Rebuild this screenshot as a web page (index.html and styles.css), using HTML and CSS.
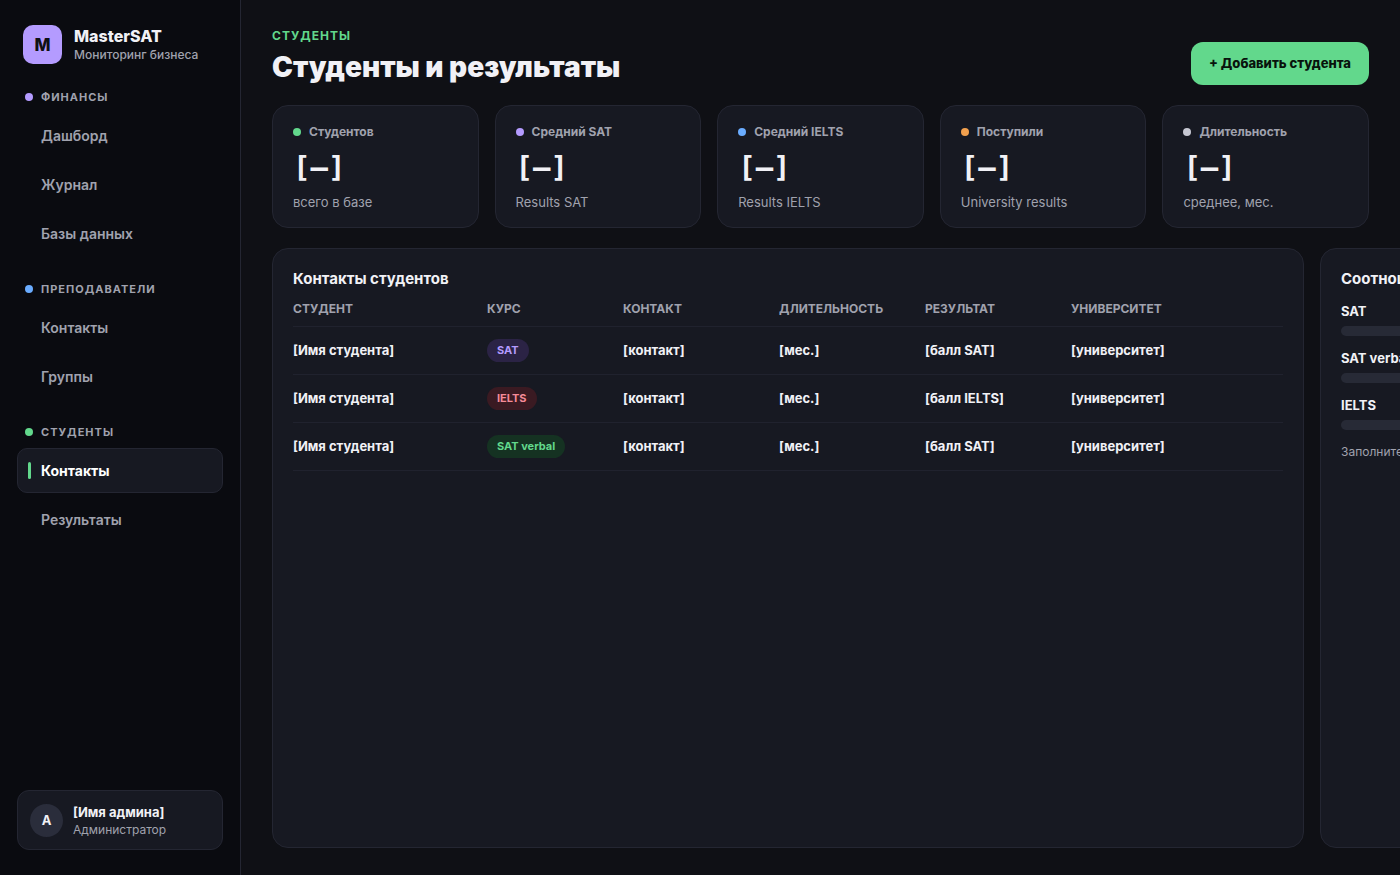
FILE: index.html
```
<!DOCTYPE html>
<html lang="ru">
<head>
    <meta charset="UTF-8">
    <meta name="viewport" content="width=device-width, initial-scale=1.0">
    <title>MasterSAT</title>
    <link rel="stylesheet" href="styles.css">
</head>
<body>
    <div class="app">
        <!-- Sidebar -->
        <aside class="sidebar">
            <div class="brand">
                <div class="brand-logo">M</div>
                <div>
                    <div class="brand-name">MasterSAT</div>
                    <div class="brand-sub">Мониторинг бизнеса</div>
                </div>
            </div>

            <nav class="nav">
                <div class="nav-group">
                    <div class="nav-label"><span class="dot purple"></span>Финансы</div>
                    <a href="#" class="nav-item">Дашборд</a>
                    <a href="#" class="nav-item">Журнал</a>
                    <a href="#" class="nav-item">Базы данных</a>
                </div>
                <div class="nav-group">
                    <div class="nav-label"><span class="dot blue"></span>Преподаватели</div>
                    <a href="#" class="nav-item">Контакты</a>
                    <a href="#" class="nav-item">Группы</a>
                </div>
                <div class="nav-group">
                    <div class="nav-label"><span class="dot green"></span>Студенты</div>
                    <a href="#" class="nav-item active">Контакты</a>
                    <a href="#" class="nav-item">Результаты</a>
                </div>
            </nav>

            <div class="user">
                <div class="avatar">A</div>
                <div>
                    <div class="user-name">[Имя админа]</div>
                    <div class="user-role">Администратор</div>
                </div>
            </div>
        </aside>

        <!-- Main -->
        <main class="main">
            <header class="header">
                <div>
                    <div class="eyebrow">Студенты</div>
                    <h1>Студенты и результаты</h1>
                </div>
                <button type="button" class="add-btn">+ Добавить студента</button>
            </header>

            <section class="stats">
                <div class="stat">
                    <div class="stat-label"><span class="dot green"></span>Студентов</div>
                    <div class="stat-value">[—]</div>
                    <div class="stat-note">всего в базе</div>
                </div>
                <div class="stat">
                    <div class="stat-label"><span class="dot purple"></span>Средний SAT</div>
                    <div class="stat-value">[—]</div>
                    <div class="stat-note">Results SAT</div>
                </div>
                <div class="stat">
                    <div class="stat-label"><span class="dot blue"></span>Средний IELTS</div>
                    <div class="stat-value">[—]</div>
                    <div class="stat-note">Results IELTS</div>
                </div>
                <div class="stat">
                    <div class="stat-label"><span class="dot orange"></span>Поступили</div>
                    <div class="stat-value">[—]</div>
                    <div class="stat-note">University results</div>
                </div>
                <div class="stat">
                    <div class="stat-label"><span class="dot gray"></span>Длительность</div>
                    <div class="stat-value">[—]</div>
                    <div class="stat-note">среднее, мес.</div>
                </div>
            </section>

            <div class="panels">
                <section class="panel">
                    <h2>Контакты студентов</h2>
                    <table class="table">
                        <colgroup>
                            <col class="col-student">
                            <col class="col-course">
                            <col class="col-contact">
                            <col class="col-length">
                            <col class="col-result">
                            <col class="col-university">
                        </colgroup>
                        <thead>
                            <tr>
                                <th>Студент</th>
                                <th>Курс</th>
                                <th>Контакт</th>
                                <th>Длительность</th>
                                <th>Результат</th>
                                <th>Университет</th>
                            </tr>
                        </thead>
                        <tbody>
                            <tr>
                                <td>[Имя студента]</td>
                                <td><span class="badge sat">SAT</span></td>
                                <td>[контакт]</td>
                                <td>[мес.]</td>
                                <td>[балл SAT]</td>
                                <td>[университет]</td>
                            </tr>
                            <tr>
                                <td>[Имя студента]</td>
                                <td><span class="badge ielts">IELTS</span></td>
                                <td>[контакт]</td>
                                <td>[мес.]</td>
                                <td>[балл IELTS]</td>
                                <td>[университет]</td>
                            </tr>
                            <tr>
                                <td>[Имя студента]</td>
                                <td><span class="badge verbal">SAT verbal</span></td>
                                <td>[контакт]</td>
                                <td>[мес.]</td>
                                <td>[балл SAT]</td>
                                <td>[университет]</td>
                            </tr>
                        </tbody>
                    </table>
                </section>

                <section class="panel ratio">
                    <h2>Соотношение курсов</h2>
                    <div class="ratio-row">
                        <div class="ratio-name">SAT</div>
                        <div class="track"></div>
                    </div>
                    <div class="ratio-row">
                        <div class="ratio-name">SAT verbal</div>
                        <div class="track"></div>
                    </div>
                    <div class="ratio-row">
                        <div class="ratio-name">IELTS</div>
                        <div class="track"></div>
                    </div>
                    <p class="ratio-note">Заполните данные студентов</p>
                </section>
            </div>
        </main>
    </div>
</body>
</html>
```
FILE: styles.css
```
:root {
    --bg: #0f1015;
    --side: #0a0b10;
    --card: #171922;
    --line: #242632;
    --text: #f1f1f6;
    --muted: #a0a2ae;
    --green: #62d88c;
    --purple: #b49bff;
    --blue: #6aacff;
    --orange: #f2a04e;
}

* {
    box-sizing: border-box;
}

body {
    margin: 0;
    background: var(--bg);
    color: var(--text);
    font-family: Inter, "Noto Sans", sans-serif;
    font-size: 14px;
    overflow: hidden;
}

h1, h2, p {
    margin: 0;
}

.app {
    display: flex;
    height: 100vh;
}

.dot {
    width: 8px;
    height: 8px;
    border-radius: 50%;
    flex: none;
}

.dot.purple { background: var(--purple); }
.dot.blue { background: var(--blue); }
.dot.green { background: var(--green); }
.dot.orange { background: var(--orange); }
.dot.gray { background: #c6c7d2; }

/* Sidebar */
.sidebar {
    width: 241px;
    flex: none;
    display: flex;
    flex-direction: column;
    padding: 25px 17px;
    background: var(--side);
    border-right: 1px solid var(--line);
}

.brand {
    display: flex;
    align-items: center;
    gap: 12px;
    padding: 0 6px;
    margin-bottom: 25px;
}

.brand-logo {
    width: 39px;
    height: 39px;
    border-radius: 10px;
    background: var(--purple);
    color: #0f1015;
    display: flex;
    align-items: center;
    justify-content: center;
    font-size: 17px;
    font-weight: 800;
}

.brand-name {
    font-size: 16px;
    line-height: 20px;
    font-weight: 800;
}

.brand-sub {
    font-size: 12px;
    line-height: 18px;
    font-weight: 500;
    color: var(--muted);
}

.nav {
    display: flex;
    flex-direction: column;
    gap: 25px;
}

.nav-group {
    display: flex;
    flex-direction: column;
    gap: 4px;
}

.nav-label {
    display: flex;
    align-items: center;
    gap: 8px;
    padding-left: 8px;
    margin-bottom: 4px;
    font-size: 11px;
    line-height: 16px;
    font-weight: 700;
    letter-spacing: 1px;
    text-transform: uppercase;
    color: var(--muted);
}

.nav-item {
    position: relative;
    padding: 11px 23px;
    border: 1px solid transparent;
    border-radius: 10px;
    color: var(--muted);
    font-size: 14px;
    line-height: 21px;
    font-weight: 600;
    text-decoration: none;
}

.nav-item:hover {
    color: var(--text);
}

.nav-item.active {
    background: var(--card);
    border-color: var(--line);
    color: #fff;
    font-weight: 700;
}

.nav-item.active::before {
    content: "";
    position: absolute;
    left: 10px;
    top: 13px;
    bottom: 13px;
    width: 3px;
    border-radius: 2px;
    background: var(--green);
}

.user {
    display: flex;
    align-items: center;
    gap: 10px;
    margin-top: auto;
    padding: 11px 12px;
    background: var(--card);
    border: 1px solid var(--line);
    border-radius: 12px;
}

.avatar {
    width: 33px;
    height: 33px;
    border-radius: 50%;
    background: #2a2d3b;
    display: flex;
    align-items: center;
    justify-content: center;
    font-size: 13px;
    font-weight: 700;
}

.user-name {
    font-size: 13px;
    line-height: 20px;
    font-weight: 700;
}

.user-role {
    font-size: 12px;
    line-height: 16px;
    color: var(--muted);
}

/* Main */
.main {
    flex: 1;
    min-width: 0;
    display: flex;
    flex-direction: column;
    gap: 20px;
    padding: 28px 31px 27px;
}

.header {
    display: flex;
    align-items: flex-end;
    justify-content: space-between;
}

.eyebrow {
    font-size: 12px;
    line-height: 16px;
    font-weight: 700;
    letter-spacing: 1px;
    text-transform: uppercase;
    color: var(--green);
}

h1 {
    margin-top: 6px;
    font-size: 28px;
    line-height: 35px;
    font-weight: 900;
}

.add-btn {
    padding: 11px 18px;
    border: none;
    border-radius: 12px;
    background: var(--green);
    color: #08130c;
    font-family: inherit;
    font-size: 13px;
    line-height: 21px;
    font-weight: 800;
    cursor: pointer;
}

.stats {
    display: grid;
    grid-template-columns: repeat(5, 1fr);
    gap: 16px;
}

.stat {
    padding: 16px 20px;
    background: var(--card);
    border: 1px solid var(--line);
    border-radius: 16px;
}

.stat-label {
    display: flex;
    align-items: center;
    gap: 8px;
    font-size: 12px;
    line-height: 20px;
    font-weight: 700;
    color: var(--muted);
}

.stat-value {
    margin: 8px 0;
    font-family: "DejaVu Sans Mono", monospace;
    font-size: 29px;
    line-height: 35px;
    font-weight: 700;
}

.stat-note {
    font-size: 13px;
    line-height: 18px;
    color: var(--muted);
}

.panels {
    flex: 1;
    display: flex;
    gap: 16px;
}

.panel {
    flex: none;
    padding: 20px;
    background: var(--card);
    border: 1px solid var(--line);
    border-radius: 16px;
}

.panel h2 {
    font-size: 15px;
    line-height: 20px;
    font-weight: 700;
}

.table {
    width: 990px;
    table-layout: fixed;
    border-collapse: collapse;
}

.col-student { width: 194px; }
.col-course { width: 136px; }
.col-contact { width: 156px; }
.col-length { width: 146px; }
.col-result { width: 146px; }

.table th,
.table td {
    padding: 0;
    border-bottom: 1px solid #20222e;
    text-align: left;
}

.table th {
    height: 37px;
    padding-top: 3px;
    font-size: 12px;
    line-height: 16px;
    font-weight: 700;
    text-transform: uppercase;
    color: var(--muted);
}

.table td {
    height: 48px;
    font-size: 13px;
    line-height: 20px;
    font-weight: 700;
}

.badge {
    display: inline-block;
    padding: 3px 10px;
    border-radius: 12px;
    font-size: 11px;
    line-height: 17px;
    font-weight: 700;
}

.badge.sat {
    background: #2b2345;
    color: var(--purple);
}

.badge.ielts {
    background: #3a1a22;
    color: #f58a98;
}

.badge.verbal {
    background: #153222;
    color: var(--green);
}

.ratio {
    width: 360px;
}

.ratio-row {
    margin-top: 12px;
}

.ratio-name {
    font-size: 13px;
    line-height: 20px;
    font-weight: 700;
}

.track {
    height: 10px;
    margin-top: 5px;
    border-radius: 5px;
    background: #272a36;
}

.ratio-note {
    margin-top: 12px;
    font-size: 12px;
    line-height: 20px;
    color: var(--muted);
}
```
